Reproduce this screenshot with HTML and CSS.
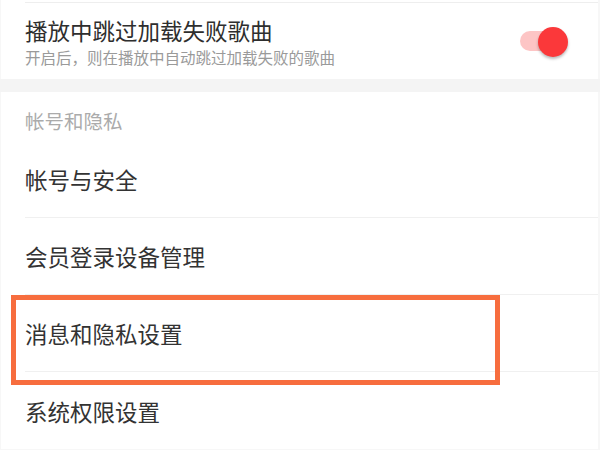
FILE: index.html
```html
<!DOCTYPE html>
<html lang="zh-CN">
<head>
<meta charset="utf-8">
<link rel="stylesheet" href="styles.css">
</head>
<body>
<div class="page">
  <section class="panel top-panel">
    <div class="stub"></div>
    <div class="toggle-row">
      <div class="toggle-text">
        <div class="title">播放中跳过加载失败歌曲</div>
        <div class="subtitle">开启后，则在播放中自动跳过加载失败的歌曲</div>
      </div>
      <div class="switch">
        <span class="track"></span>
        <span class="knob"></span>
      </div>
    </div>
  </section>
  <div class="band"></div>
  <section class="panel">
    <div class="section-header">帐号和隐私</div>
    <div class="item">帐号与安全</div>
    <div class="item">会员登录设备管理</div>
    <div class="item item-marked">消息和隐私设置<span class="highlight"></span></div>
    <div class="item item-last">系统权限设置</div>
  </section>
</div>
</body>
</html>
```

FILE: styles.css
```css
* { box-sizing: border-box; }
html, body {
  margin: 0;
  padding: 0;
  background: #f7f7f7;
}
body {
  width: 600px;
  height: 450px;
  overflow: hidden;
  font-family: "Noto Sans CJK SC", "Noto Sans", sans-serif;
}
.page {
  display: flex;
  flex-direction: column;
}
.panel {
  background: #ffffff;
  margin: 0 2px 0 1px;
}
.stub {
  height: 3px;
  margin-left: 24px;
  border-bottom: 1px solid #eeeeee;
}
.toggle-row {
  display: flex;
  align-items: center;
  justify-content: space-between;
  padding: 11px 0 11px 24px;
  height: 76px;
}
.title {
  font-size: 22.5px;
  line-height: 32px;
  color: #2e2e2e;
}
.subtitle {
  font-size: 15.5px;
  line-height: 22px;
  color: #9a9a9a;
}
.switch {
  position: relative;
  width: 50px;
  height: 30px;
  margin-right: 29px;
  margin-top: 2px;
}
.track {
  position: absolute;
  left: 1px;
  top: 4px;
  width: 40px;
  height: 20px;
  border-radius: 10px;
  background: #fdc5c5;
}
.knob {
  position: absolute;
  left: 19px;
  top: 0;
  width: 30px;
  height: 30px;
  border-radius: 50%;
  background: #fb383a;
  box-shadow: 0 2px 3px rgba(0, 0, 0, 0.28);
}
.band {
  height: 13px;
  background: #f4f4f4;
}
.section-header {
  height: 49px;
  padding: 16px 0 0 24px;
  font-size: 19.5px;
  line-height: 26px;
  color: #ababab;
}
.item {
  position: relative;
  margin-left: 24px;
  height: 77px;
  display: flex;
  align-items: center;
  font-size: 22.5px;
  color: #333333;
  border-bottom: 1px solid #f0f0f0;
}
.item-last {
  border-bottom: none;
}
.item-marked {
  z-index: 2;
}
.highlight {
  position: absolute;
  left: -14px;
  top: 0;
  width: 489px;
  height: 90px;
  border: 5px solid #f76d3e;
}
```
